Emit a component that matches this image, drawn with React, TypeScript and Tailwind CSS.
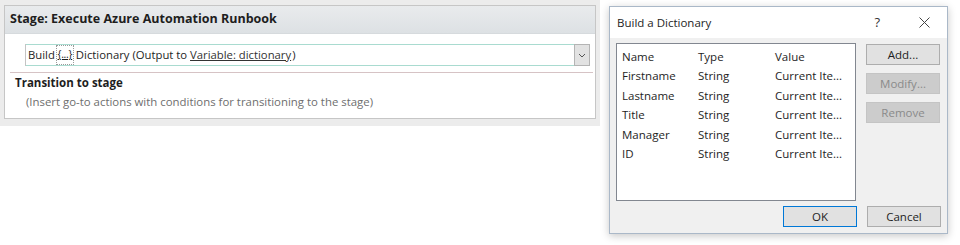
import React from "react";

const rows = [
  ["Firstname", "String", "Current Ite..."],
  ["Lastname", "String", "Current Ite..."],
  ["Title", "String", "Current Ite..."],
  ["Manager", "String", "Current Ite..."],
  ["ID", "String", "Current Ite..."],
];

export default function App() {
  return (
    <div
      className="w-[960px] h-[245px] bg-white flex overflow-hidden text-[#1e1e1e]"
      style={{ fontFamily: '"Open Sans", "Noto Sans", sans-serif' }}
    >
      {/* Left designer area */}
      <div className="w-[600px] h-[126px] bg-[#ececec] pt-[5px] pl-[4px] pr-[4px] pb-[7px] flex flex-col">
        <div className="flex-1 border border-[#c6c6c6] bg-white flex flex-col">
          <div className="h-[28px] bg-gradient-to-b from-[#e9ebed] to-[#dde1e4] flex items-center pl-[5px] border-b border-[#d6dadd]">
            <span className="text-[12.5px] font-bold">Stage: Execute Azure Automation Runbook</span>
          </div>
          <div className="pl-[20px] pr-[5px] pt-[10px]">
            <div className="h-[22px] flex items-stretch border-l border-[#c4c4c4]">
              <div className="flex-1 flex items-center border-t border-b border-[#a9dbd0] pl-[2px] text-[11.3px]">
                <span>Build</span>
                <span className="ml-[1px] mr-[2px] h-[20px] w-[18px] flex items-center justify-center border border-dotted border-[#9a9a9a] underline text-[10.5px] tracking-[-0.3px]">{"{...}"}</span>
                <span>Dictionary (Output to&nbsp;</span>
                <span className="underline text-[#333]">Variable: dictionary</span>
                <span className="ml-[1px]">)</span>
              </div>
              <div className="w-[16px] bg-[#e2e2e2] border border-[#b4b4b4] flex items-center justify-center">
                <svg width="8" height="5" viewBox="0 0 8 5">
                  <path d="M1 1 L4 4 L7 1" fill="none" stroke="#555" strokeWidth="1" />
                </svg>
              </div>
            </div>
          </div>
          <div className="ml-[5px] mr-[2px] mt-[6px] h-px bg-[#d6c3c5]" />
          <div className="pl-[10px] pt-[1px] text-[11.5px] font-bold leading-[18px]">Transition to stage</div>
          <div className="pl-[21px] pt-[1px] text-[11.4px] text-[#6e6e6e] leading-[18px]">
            (Insert go-to actions with conditions for transitioning to the stage)
          </div>
        </div>
      </div>

      {/* Dialog */}
      <div className="ml-[9px] mt-[6px] w-[339px] h-[228px] border border-[#aab8c8] bg-[#f0f0f0] flex flex-col shadow-[0_2px_8px_rgba(0,0,0,0.22)]">
        <div className="h-[31px] bg-white flex items-center pl-[7px] text-[11.5px]">
          <span className="flex-1">Build a Dictionary</span>
          <span className="text-[13px] text-[#333] mr-[39px]">?</span>
          <svg width="11" height="11" viewBox="0 0 11 11" className="mr-[17px]">
            <path d="M0.5 0.5 L10.5 10.5 M10.5 0.5 L0.5 10.5" stroke="#444" strokeWidth="1" />
          </svg>
        </div>
        <div className="flex-1 flex flex-col pt-[5px] pl-[6px] pr-[6px] pb-[6px]">
          <div className="flex gap-[10px]">
            <div className="w-[240px] h-[158px] bg-white border border-[#828790] pt-[3px] text-[11.5px]">
              <div className="flex h-[19.4px] items-center">
                <span className="w-[81px] pl-[5px]">Name</span>
                <span className="w-[77px]">Type</span>
                <span>Value</span>
              </div>
              {rows.map((r) => (
                <div key={r[0]} className="flex h-[19.4px] items-center">
                  <span className="w-[81px] pl-[5px]">{r[0]}</span>
                  <span className="w-[77px]">{r[1]}</span>
                  <span>{r[2]}</span>
                </div>
              ))}
            </div>
            <div className="flex flex-col gap-[8px] pt-[1px] text-[11.5px]">
              <div className="w-[74px] h-[21px] bg-[#e1e1e1] border border-[#adadad] flex items-center justify-center">Add...</div>
              <div className="w-[74px] h-[21px] bg-[#cccccc] border border-[#c4c4c4] text-[#8a8a8a] flex items-center justify-center">Modify...</div>
              <div className="w-[74px] h-[21px] bg-[#cccccc] border border-[#c4c4c4] text-[#8a8a8a] flex items-center justify-center">Remove</div>
            </div>
          </div>
          <div className="mt-[5px] flex justify-end gap-[10px] text-[11.5px]">
            <div className="w-[74px] h-[21px] bg-[#e1e1e1] border border-[#0078d7] flex items-center justify-center">OK</div>
            <div className="w-[74px] h-[21px] bg-[#e1e1e1] border border-[#adadad] flex items-center justify-center">Cancel</div>
          </div>
        </div>
      </div>
    </div>
  );
}
